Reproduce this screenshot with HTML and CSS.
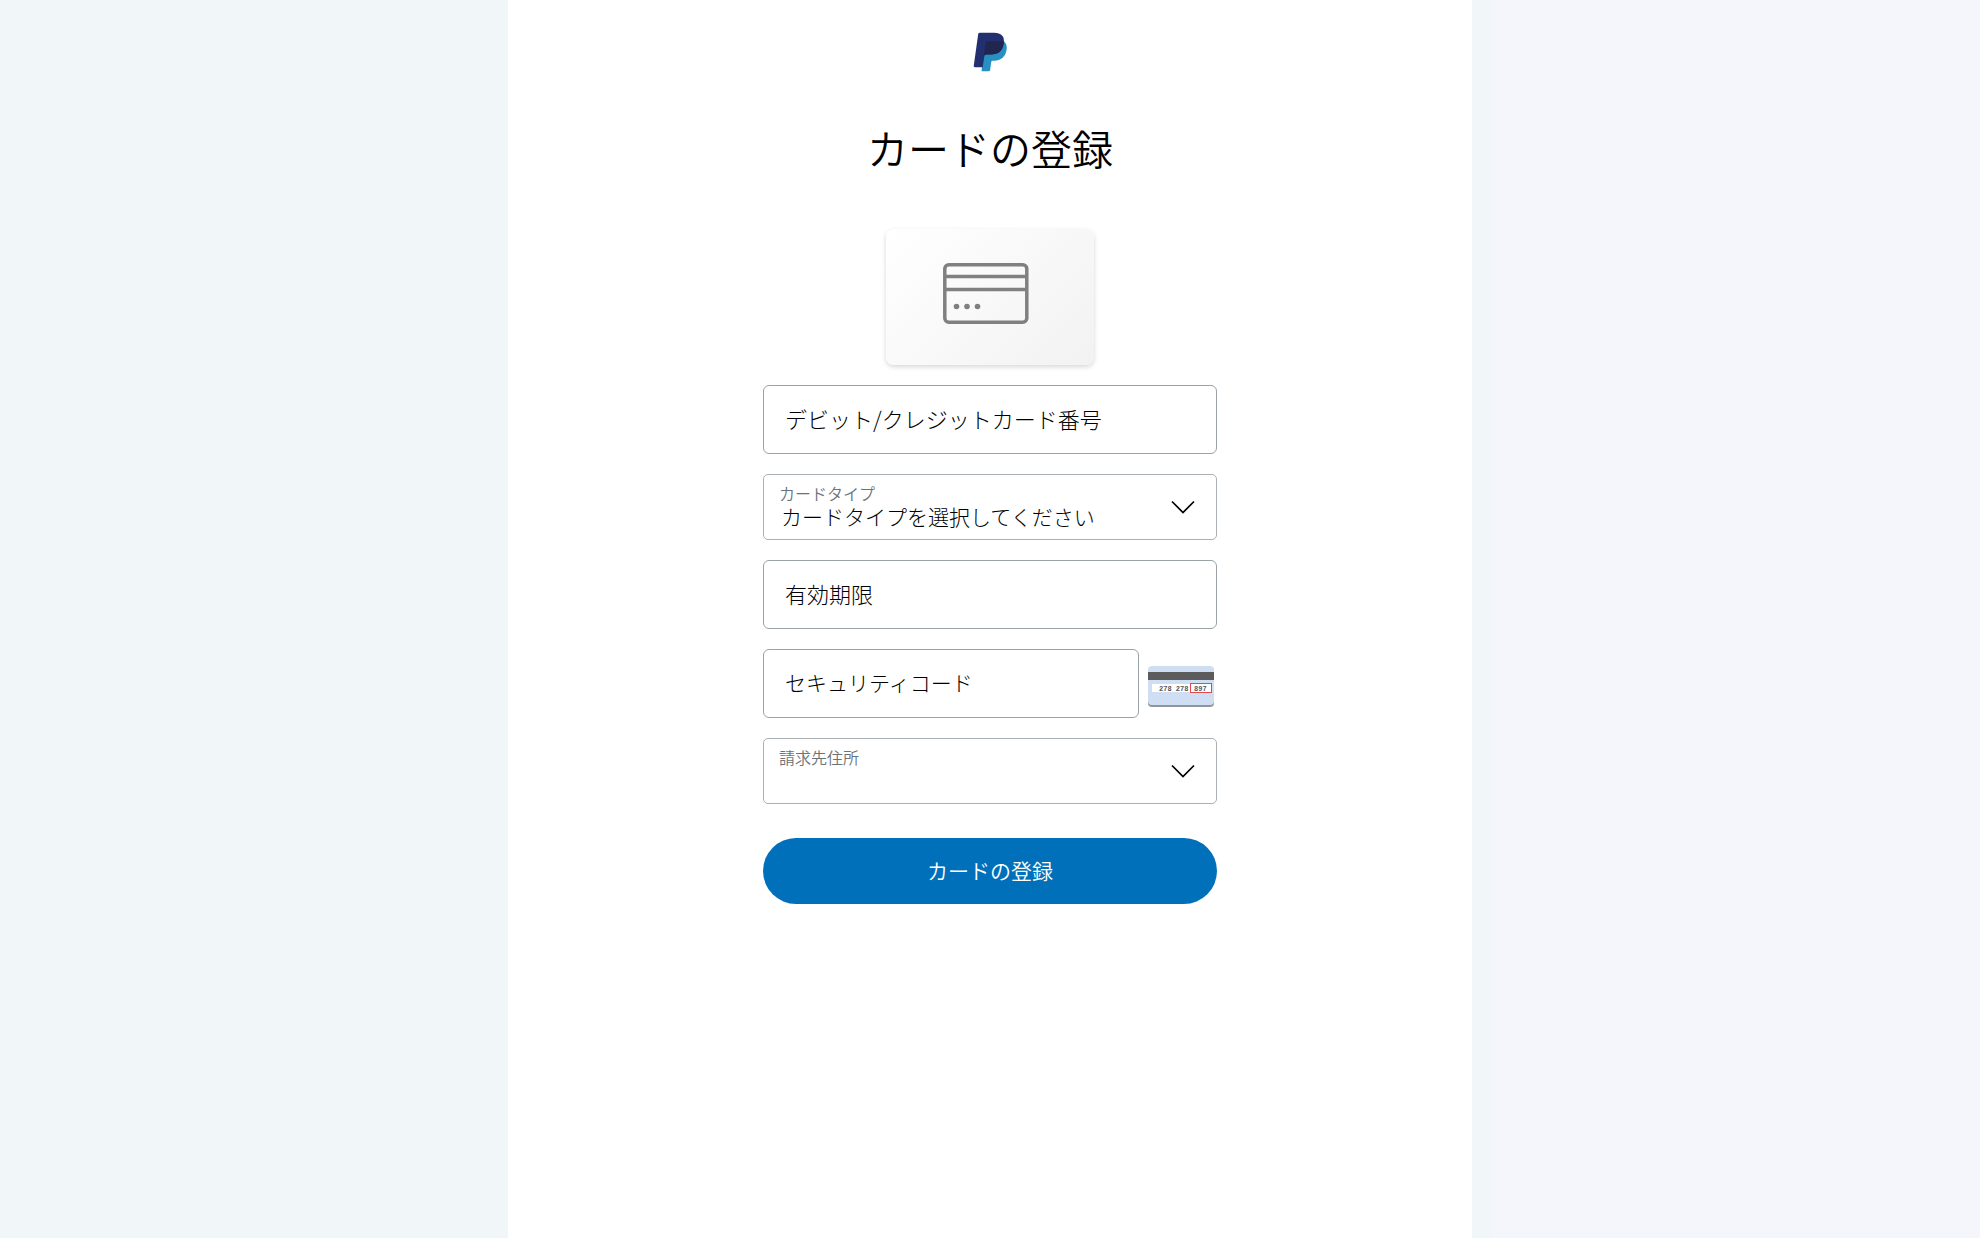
FILE: index.html
```html
<!DOCTYPE html>
<html lang="ja">
<head>
    <meta charset="UTF-8">
    <meta name="viewport" content="width=device-width, initial-scale=1.0">
    <title>カードの登録</title>
    <link rel="stylesheet" href="styles.css">
</head>
<body>
    <main class="contenido">
        <!-- Logo -->
        <svg class="logo" viewBox="0 0 99 117" role="img" aria-label="PayPal">
            <path fill="#2790c3" d="M36 27H90C97 32 100 41 98 52C95 73 81 84 62 84H57Q54 84 53 88L50 111Q49 115 46 115H28Q24 115 25 111Z"/>
            <path fill="#23306f" d="M20 2H62C82 2 93 13 90 31C87 54 73 66 51 66H39Q34 66 33 71L28 103H5Q1 103 2 99L15 6Q16 2 20 2Z"/>
            <path fill="#20264f" d="M42 27H90Q90 66 51 66H32L36 32Q37 27 42 27Z"/>
        </svg>

        <h1>カードの登録</h1>

        <!-- Imagen de la tarjeta -->
        <div class="tarjeta">
            <svg class="tarjeta-icono" viewBox="0 0 86 61" aria-hidden="true">
                <rect x="1.8" y="1.8" width="82" height="57.4" rx="4"/>
                <path d="M2 13.5H84M2 26.5H84"/>
                <circle cx="13.5" cy="43.5" r="2.8"/>
                <circle cx="24" cy="43.5" r="2.8"/>
                <circle cx="34.5" cy="43.5" r="2.8"/>
            </svg>
        </div>

        <form class="formulario">
            <div class="campo">
                <label for="numero">デビット/クレジットカード番号</label>
                <input type="text" id="numero">
            </div>

            <div class="campo-select">
                <label for="tipo">カードタイプ</label>
                <select id="tipo">
                    <option>カードタイプを選択してください</option>
                </select>
                <svg class="flecha" viewBox="0 0 24 14" aria-hidden="true"><path d="M1 1.5L12 12.5L23 1.5"/></svg>
            </div>

            <div class="campo">
                <label for="vencimiento">有効期限</label>
                <input type="text" id="vencimiento">
            </div>

            <div class="fila">
                <div class="campo campo-codigo">
                    <label for="codigo">セキュリティコード</label>
                    <input type="text" id="codigo">
                </div>
                <!-- Reverso de la tarjeta -->
                <svg class="cvv" viewBox="0 0 66 41" aria-hidden="true">
                    <rect x="0" y="2" width="66" height="39" rx="4" fill="#8e959d"/>
                    <rect x="0" y="0" width="66" height="39" rx="4" fill="#cfdef3"/>
                    <rect x="0" y="6" width="66" height="8" fill="#5c5c5c"/>
                    <rect x="4" y="18" width="59" height="8" fill="#fff"/>
                    <text x="11" y="24.5">278 278</text>
                    <rect x="42.5" y="17.5" width="21" height="9" fill="#fff" stroke="#e5484d"/>
                    <text x="46" y="24.5">897</text>
                </svg>
            </div>

            <div class="campo-select">
                <label for="direccion">請求先住所</label>
                <select id="direccion">
                    <option></option>
                </select>
                <svg class="flecha" viewBox="0 0 24 14" aria-hidden="true"><path d="M1 1.5L12 12.5L23 1.5"/></svg>
            </div>

            <button type="button" class="boton">カードの登録</button>
        </form>
    </main>
</body>
</html>
```

FILE: styles.css
```css
/* Estilos generales */
* {
    box-sizing: border-box;
}

body {
    margin: 0;
    min-height: 100vh;
    display: flex;
    justify-content: center;
    font-family: "Noto Sans CJK JP", "Noto Sans", sans-serif;
    font-weight: 300;
    color: #000;
    background: linear-gradient(to right, #f1f6f9 0 calc(50% + 502px), #f4f6fb 0);
}

.contenido {
    width: 100%;
    max-width: 964px;
    padding: 32px 24px;
    display: flex;
    flex-direction: column;
    align-items: center;
    background-color: white;
}

.logo {
    width: 34px;
    height: 40px;
}

h1 {
    margin: 45px 0 52px;
    font-size: 41px;
    font-weight: 350;
    line-height: 60px;
}

/* Imagen de la tarjeta */
.tarjeta {
    width: 208px;
    height: 136px;
    padding-right: 8px;
    padding-bottom: 8px;
    margin-bottom: 20px;
    display: flex;
    justify-content: center;
    align-items: center;
    border-radius: 8px;
    background: linear-gradient(135deg, #fff, #f2f2f2);
    box-shadow: 0 2px 5px rgba(0, 0, 0, 0.16);
}

.tarjeta-icono {
    width: 86px;
    height: 61px;
    fill: none;
    stroke: #808080;
    stroke-width: 3.5;
}

.tarjeta-icono circle {
    fill: #808080;
    stroke: none;
}

/* Formulario */
.formulario {
    width: 100%;
    max-width: 454px;
    display: flex;
    flex-direction: column;
    gap: 20px;
}

.campo,
.campo-select {
    display: grid;
    align-items: center;
}

.campo > *,
.campo-select > * {
    grid-area: 1 / 1;
}

.campo label {
    z-index: 1;
    padding: 0 0 4px 22px;
    font-size: 22px;
    pointer-events: none;
}

.campo input,
.campo-select select {
    width: 100%;
    font-family: inherit;
    font-weight: inherit;
    color: inherit;
    background-color: white;
}

.campo input {
    height: 69px;
    padding: 0 22px;
    font-size: 22px;
    border: 1px solid #9aa2a6;
    border-radius: 6px;
}

.campo-select label {
    z-index: 1;
    align-self: start;
    padding: 7px 0 0 16px;
    font-size: 16px;
    font-weight: 350;
    line-height: 24px;
    color: #6c7378;
    pointer-events: none;
}

.campo-select select {
    height: 66px;
    padding: 18px 56px 0 17px;
    font-size: 21px;
    border: 1px solid #aab0b3;
    border-radius: 5px;
    appearance: none;
}

.flecha {
    z-index: 1;
    width: 24px;
    height: 14px;
    margin-right: 22px;
    justify-self: end;
    fill: none;
    stroke: #000;
    stroke-width: 1.7;
    pointer-events: none;
}

.fila {
    display: flex;
    align-items: center;
    gap: 9px;
}

.campo-codigo {
    flex: 1;
}

.campo-codigo label {
    font-size: 21px;
}

.cvv {
    width: 66px;
    height: 41px;
    margin: 5px 3px 0 0;
}

.cvv text {
    font-family: "Liberation Mono", monospace;
    font-size: 7px;
    font-weight: bold;
    fill: #555;
}

/* Botón de registro */
.boton {
    height: 66px;
    margin-top: 14px;
    padding-bottom: 4px;
    font-family: inherit;
    font-size: 21px;
    font-weight: 350;
    color: white;
    background-color: #0070ba;
    border: none;
    border-radius: 33px;
    cursor: pointer;
}
```
